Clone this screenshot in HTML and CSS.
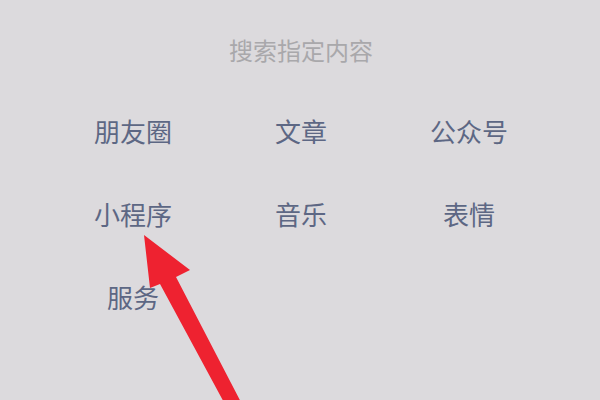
FILE: index.html
```html
<!DOCTYPE html>
<html lang="zh-CN">
<head>
<meta charset="utf-8">
<link rel="stylesheet" href="styles.css">
</head>
<body>
<div class="page">
  <div class="title">搜索指定内容</div>
  <div class="grid">
    <div class="item">朋友圈</div>
    <div class="item">文章</div>
    <div class="item">公众号</div>
    <div class="item">小程序</div>
    <div class="item">音乐</div>
    <div class="item">表情</div>
    <div class="item">服务</div>
  </div>
  <svg class="arrow" width="600" height="400" viewBox="0 0 600 400">
    <polygon points="144,235 190,270 176,277 244,408 227,408 160,284 150,288" fill="#ee2230"/>
  </svg>
</div>
</body>
</html>
```
FILE: styles.css
```css
html, body {
  margin: 0;
  padding: 0;
  background: #dcdadd;
}
.page {
  position: relative;
  width: 600px;
  height: 400px;
  overflow: hidden;
  font-family: "Noto Sans CJK SC", "Noto Sans", sans-serif;
}
.title {
  width: 504px;
  margin-left: 49px;
  padding-top: 38px;
  font-size: 24px;
  line-height: 24px;
  color: #a9a8ab;
  text-align: center;
}
.grid {
  margin-left: 49px;
  margin-top: 56px;
  display: grid;
  grid-template-columns: repeat(3, 168px);
  grid-auto-rows: 26px;
  row-gap: 57px;
}
.item {
  font-size: 26px;
  line-height: 26px;
  color: #5d6784;
  text-align: center;
}
.arrow {
  position: absolute;
  left: 0;
  top: 0;
}
```
